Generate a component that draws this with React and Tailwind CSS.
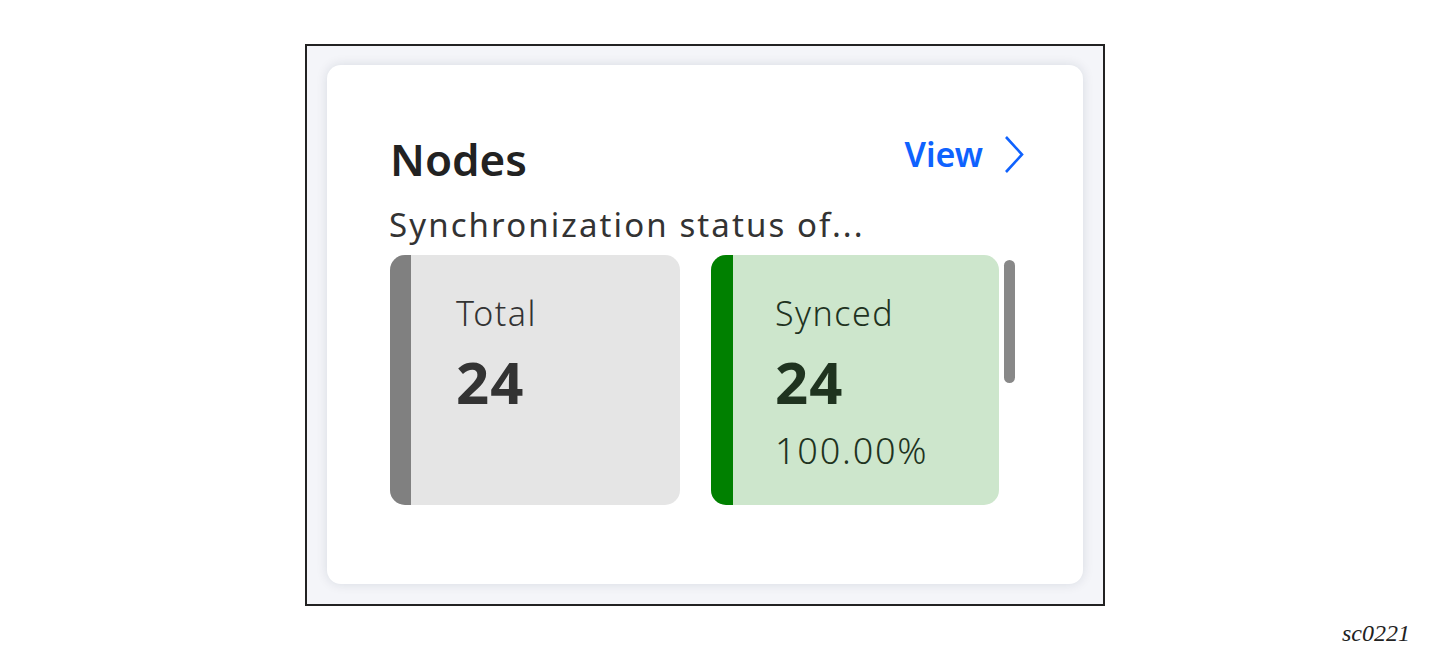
export default function App() {
    const font = { fontFamily: '"Noto Sans", "Open Sans", sans-serif' };

    return (
        <div className="w-[1429px] h-[653px] bg-white pt-[44px] pl-[305px]">
            <div className="w-[800px] h-[562px] border-2 border-[#222] bg-[#f4f5f9] pt-[19px] pl-[20px]">
                <div
                    className="w-[756px] h-[519px] bg-white rounded-[14px] shadow-[0_0_12px_rgba(20,30,60,0.12)] pt-[72px] pl-[63px] pr-[59px]"
                    style={font}
                >
                    {/* header */}
                    <div className="flex items-start justify-between">
                        <h2 className="text-[44px] leading-none font-semibold text-[#222]">
                            Nodes
                        </h2>
                        <a className="flex items-start text-[34px] leading-none font-semibold text-[#0f62fe]">
                            View
                            <svg
                                width="20"
                                height="38"
                                viewBox="0 0 20 38"
                                className="ml-[21px] -mt-[1px]"
                                fill="none"
                                stroke="#0f62fe"
                                strokeWidth="2.6"
                            >
                                <polyline points="2,1 18,18.5 2,36" />
                            </svg>
                        </a>
                    </div>
                    <p className="mt-[27px] text-[33px] leading-none tracking-[2.1px] text-[#333] -ml-[1px]">
                        Synchronization status of...
                    </p>

                    {/* tiles */}
                    <div className="flex mt-[14px]">
                        <div className="flex w-[290px] h-[250px] rounded-[15px] overflow-hidden bg-[#e5e5e5]">
                            <div className="w-[21px] bg-[#808080]"></div>
                            <div className="pl-[45px] pt-[41px] text-[#333]">
                                <div className="text-[34px] leading-none font-light tracking-[1.5px]">
                                    Total
                                </div>
                                <div className="mt-[23px] text-[58px] leading-none font-bold tracking-[1px]">
                                    24
                                </div>
                            </div>
                        </div>
                        <div className="flex ml-[31px] w-[288px] h-[250px] rounded-[15px] overflow-hidden bg-[#cde6cc]">
                            <div className="w-[22px] bg-[#008000]"></div>
                            <div className="pl-[42px] pt-[41px] text-[#1f331f]">
                                <div className="text-[34px] leading-none font-light tracking-[1.5px]">
                                    Synced
                                </div>
                                <div className="mt-[23px] text-[58px] leading-none font-bold tracking-[1px]">
                                    24
                                </div>
                                <div className="mt-[22px] text-[36px] leading-none font-light tracking-[1.8px]">
                                    100.00%
                                </div>
                            </div>
                        </div>
                        <div className="ml-[5px] mt-[5px] w-[11px] h-[123px] rounded-full bg-[#888]"></div>
                    </div>
                </div>
            </div>
            <div
                className="pr-[19px] mt-[15px] text-right text-[24px] leading-none italic text-[#222]"
                style={{ fontFamily: '"Liberation Serif", serif' }}
            >
                sc0221
            </div>
        </div>
    );
}
